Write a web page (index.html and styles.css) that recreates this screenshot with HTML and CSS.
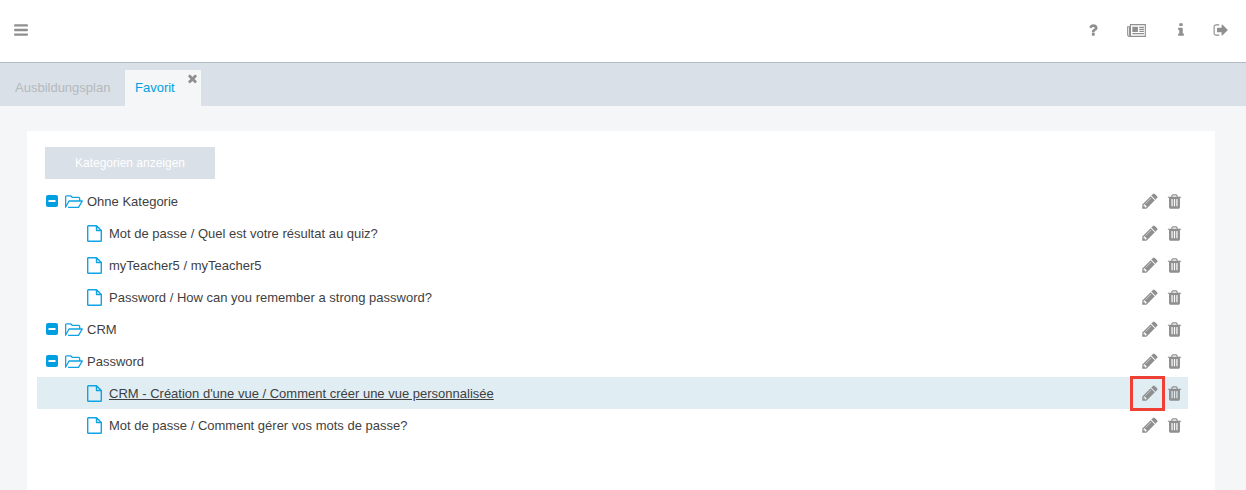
FILE: index.html
```html
<!DOCTYPE html>
<html lang="de">
<head>
    <meta charset="UTF-8">
    <meta name="viewport" content="width=device-width, initial-scale=1.0">
    <title>Favorit</title>
    <link rel="stylesheet" href="styles.css">
</head>
<body>
    <svg class="sprites" aria-hidden="true">
        <symbol id="i-bars" viewBox="0 0 1792 1792"><path d="M1664 1344v128q0 26-19 45t-45 19h-1408q-26 0-45-19t-19-45v-128q0-26 19-45t45-19h1408q26 0 45 19t19 45zm0-512v128q0 26-19 45t-45 19h-1408q-26 0-45-19t-19-45v-128q0-26 19-45t45-19h1408q26 0 45 19t19 45zm0-512v128q0 26-19 45t-45 19h-1408q-26 0-45-19t-19-45v-128q0-26 19-45t45-19h1408q26 0 45 19t19 45z"/></symbol>
        <symbol id="i-question" viewBox="0 0 1792 1792"><path d="M1088 1256v240q0 16-12 28t-28 12h-240q-16 0-28-12t-12-28v-240q0-16 12-28t28-12h240q16 0 28 12t12 28zm316-600q0 54-15.5 101t-35 76.5-55 59.5-57.5 43.5-61 35.5q-41 23-68.5 65t-27.5 67q0 17-12 32.5t-28 15.5h-240q-15 0-25.5-18.5t-10.5-37.5v-45q0-83 65-156.5t143-108.5q59-27 84-56t25-76q0-42-46.5-74t-107.5-32q-65 0-108 29-35 25-107 115-13 16-31 16-12 0-25-8l-164-125q-13-10-15.5-25t5.5-28q160-266 464-266 80 0 161 31t146 83 106 127.5 41 158.5z"/></symbol>
        <symbol id="i-info" viewBox="0 0 1792 1792"><path d="M1216 1344v128q0 26-19 45t-45 19h-512q-26 0-45-19t-19-45v-128q0-26 19-45t45-19h64v-384h-64q-26 0-45-19t-19-45v-128q0-26 19-45t45-19h384q26 0 45 19t19 45v576h64q26 0 45 19t19 45zm-128-1152v192q0 26-19 45t-45 19h-256q-26 0-45-19t-19-45v-192q0-26 19-45t45-19h256q26 0 45 19t19 45z"/></symbol>
        <symbol id="i-signout" viewBox="0 0 1792 1792"><path d="M704 1440q0 4 1 20t.5 26.5-3 23.5-10 19.5-20.5 6.5h-320q-119 0-203.5-84.5t-84.5-203.5v-704q0-119 84.5-203.5t203.5-84.5h320q13 0 22.5 9.5t9.5 22.5q0 4 1 20t.5 26.5-3 23.5-10 19.5-20.5 6.5h-320q-66 0-113 47t-47 113v704q0 66 47 113t113 47h312l11.5 1 11.5 3 8 5.5 7 9 2 13.5zm928-544q0 26-19 45l-544 544q-19 19-45 19t-45-19-19-45v-288h-448q-26 0-45-19t-19-45v-384q0-26 19-45t45-19h448v-288q0-26 19-45t45-19 45 19l544 544q19 19 19 45z"/></symbol>
        <symbol id="i-close" viewBox="0 0 1792 1792"><path d="M1490 1322q0 40-28 68l-136 136q-28 28-68 28t-68-28l-294-294-294 294q-28 28-68 28t-68-28l-136-136q-28-28-28-68t28-68l294-294-294-294q-28-28-28-68t28-68l136-136q28-28 68-28t68 28l294 294 294-294q28-28 68-28t68 28l136 136q28 28 28 68t-28 68l-294 294 294 294q28 28 28 68z"/></symbol>
        <symbol id="i-pencil" viewBox="0 0 1792 1792"><path d="M491 1536l91-91-235-235-91 91v107h128v128h107zm523-928q0-22-22-22-10 0-17 7l-542 542q-7 7-7 17 0 22 22 22 10 0 17-7l542-542q7-7 7-17zm-54-192l416 416-832 832h-416v-416zm683 96q0 53-37 90l-166 166-416-416 166-165q36-38 90-38 53 0 91 38l235 234q37 39 37 91z"/></symbol>
        <symbol id="i-trash" viewBox="0 0 1792 1792"><path d="M704 1376v-704q0-14-9-23t-23-9h-64q-14 0-23 9t-9 23v704q0 14 9 23t23 9h64q14 0 23-9t9-23zm256 0v-704q0-14-9-23t-23-9h-64q-14 0-23 9t-9 23v704q0 14 9 23t23 9h64q14 0 23-9t9-23zm256 0v-704q0-14-9-23t-23-9h-64q-14 0-23 9t-9 23v704q0 14 9 23t23 9h64q14 0 23-9t9-23zm-544-992h448l-48-117q-7-9-17-11h-317q-10 2-17 11zm928 32v64q0 14-9 23t-23 9h-96v948q0 83-47 143.5t-113 60.5h-832q-66 0-113-58.5t-47-141.5v-952h-96q-14 0-23-9t-9-23v-64q0-14 9-23t23-9h309l70-167q15-37 54-63t79-26h320q40 0 79 26t54 63l70 167h309q14 0 23 9t9 23z"/></symbol>
        <symbol id="i-news" viewBox="0 0 20 14"><path d="M3.500 .7h16v12.600h-17q-2 0-2-2v-8.300h2v8.300q0 .7 1 .7z" fill="none" stroke="currentColor" stroke-width="1.200"/><path d="M5.500 3h6v5.500h-6zM13 3h5v1.300h-5zM13 5.100h5v1.300h-5zM13 7.200h5v1.300h-5zM5.500 9.800h12.500v1.300h-12.500z"/></symbol>
        <symbol id="i-minus" viewBox="0 0 12 12"><rect width="12" height="12" rx="2" fill="#00a0e0"/><rect x="2.500" y="5" width="7" height="2" fill="#fff"/></symbol>
        <symbol id="i-folder" viewBox="0 0 18 13"><path d="M3 12.400h10.500l3.800-6.400h-13.300l-3.400 6.200v-10.200q0-1.200 1.200-1.200h3.800l1.500 1.500h6.400q1.200 0 1.200 1.200v2.500" fill="none" stroke="#0ea3e2" stroke-width="1.300" stroke-linejoin="round"/></symbol>
        <symbol id="i-file" viewBox="0 0 15 17"><path d="M1.500 .7h8l4.800 4.800v10q0 .8-.8.8h-12q-.8 0-.8-.8v-14q0-.8 .8-.8zM9.500 .7v4.800h4.800" fill="none" stroke="#0ea3e2" stroke-width="1.400" stroke-linejoin="round"/></symbol>
    </svg>

    <header class="topbar">
        <svg class="ico bars"><use href="#i-bars"/></svg>
        <nav class="top-icons">
            <svg class="ico question"><use href="#i-question"/></svg>
            <svg class="ico news"><use href="#i-news"/></svg>
            <svg class="ico info"><use href="#i-info"/></svg>
            <svg class="ico signout"><use href="#i-signout"/></svg>
        </nav>
    </header>

    <div class="tabs">
        <div class="tab">Ausbildungsplan</div>
        <div class="tab active">Favorit<svg class="ico tab-close"><use href="#i-close"/></svg></div>
    </div>

    <main class="content">
        <section class="card">
            <button class="btn-cat" type="button">Kategorien anzeigen</button>
            <ul class="tree">
                <li class="row">
                    <svg class="minus"><use href="#i-minus"/></svg>
                    <svg class="folder"><use href="#i-folder"/></svg>
                    <span class="label">Ohne Kategorie</span>
                    <span class="actions"><svg class="ico pencil"><use href="#i-pencil"/></svg><svg class="ico trash"><use href="#i-trash"/></svg></span>
                </li>
                <li class="row child">
                    <svg class="file"><use href="#i-file"/></svg>
                    <span class="label">Mot de passe / Quel est votre résultat au quiz?</span>
                    <span class="actions"><svg class="ico pencil"><use href="#i-pencil"/></svg><svg class="ico trash"><use href="#i-trash"/></svg></span>
                </li>
                <li class="row child">
                    <svg class="file"><use href="#i-file"/></svg>
                    <span class="label">myTeacher5 / myTeacher5</span>
                    <span class="actions"><svg class="ico pencil"><use href="#i-pencil"/></svg><svg class="ico trash"><use href="#i-trash"/></svg></span>
                </li>
                <li class="row child">
                    <svg class="file"><use href="#i-file"/></svg>
                    <span class="label">Password / How can you remember a strong password?</span>
                    <span class="actions"><svg class="ico pencil"><use href="#i-pencil"/></svg><svg class="ico trash"><use href="#i-trash"/></svg></span>
                </li>
                <li class="row">
                    <svg class="minus"><use href="#i-minus"/></svg>
                    <svg class="folder"><use href="#i-folder"/></svg>
                    <span class="label">CRM</span>
                    <span class="actions"><svg class="ico pencil"><use href="#i-pencil"/></svg><svg class="ico trash"><use href="#i-trash"/></svg></span>
                </li>
                <li class="row">
                    <svg class="minus"><use href="#i-minus"/></svg>
                    <svg class="folder"><use href="#i-folder"/></svg>
                    <span class="label">Password</span>
                    <span class="actions"><svg class="ico pencil"><use href="#i-pencil"/></svg><svg class="ico trash"><use href="#i-trash"/></svg></span>
                </li>
                <li class="row child selected">
                    <svg class="file"><use href="#i-file"/></svg>
                    <span class="label">CRM - Création d'une vue / Comment créer une vue personnalisée</span>
                    <span class="actions"><svg class="ico pencil"><use href="#i-pencil"/></svg><svg class="ico trash"><use href="#i-trash"/></svg></span>
                    <span class="marker"></span>
                </li>
                <li class="row child">
                    <svg class="file"><use href="#i-file"/></svg>
                    <span class="label">Mot de passe / Comment gérer vos mots de passe?</span>
                    <span class="actions"><svg class="ico pencil"><use href="#i-pencil"/></svg><svg class="ico trash"><use href="#i-trash"/></svg></span>
                </li>
            </ul>
        </section>
    </main>
</body>
</html>
```

FILE: styles.css
```css
html, body {
    margin: 0;
    padding: 0;
    height: 100%;
    overflow: hidden;
}

body {
    font-family: 'Liberation Sans', 'Arial', sans-serif;
    font-size: 13px;
    color: #3f3f3f;
    background-color: #f4f6f8;
    display: flex;
    flex-direction: column;
}

.sprites {
    display: none;
}

.ico {
    fill: #8f8f8f;
    color: #8f8f8f;
    display: block;
    flex: none;
}

/* top bar */
.topbar {
    height: 60px;
    background-color: #fff;
    border-bottom: 1px solid #b4bcc3;
    display: flex;
    align-items: center;
    justify-content: space-between;
    padding: 0 17px 2px 13px;
    flex: none;
}

.bars {
    width: 16px;
    height: 16px;
}

.top-icons {
    display: flex;
    align-items: center;
}

.question {
    width: 16px;
    height: 16px;
}

.news {
    width: 19px;
    height: 13px;
    margin-left: 26px;
}

.info {
    width: 16px;
    height: 16px;
    margin-left: 27px;
}

.signout {
    width: 16px;
    height: 16px;
    margin-left: 24px;
}

/* tabs */
.tabs {
    height: 36px;
    padding-top: 7px;
    background-color: #d9e0e7;
    display: flex;
    flex: none;
}

.tab {
    width: 125px;
    padding-left: 15px;
    box-sizing: border-box;
    line-height: 36px;
    color: #b5b9bd;
}

.tab.active {
    position: relative;
    width: 76px;
    padding-left: 10px;
    background-color: #f4f6f8;
    color: #00a0e0;
}

.tab-close {
    position: absolute;
    top: 2px;
    right: 2px;
    width: 13px;
    height: 13px;
}

/* content */
.content {
    flex: 1;
    padding: 25px 31px 0 27px;
    display: flex;
    min-height: 0;
}

.card {
    flex: 1;
    background-color: #fff;
    padding: 16px 27px 0 10px;
}

.btn-cat {
    display: block;
    width: 170px;
    height: 32px;
    margin-left: 8px;
    border: 0;
    padding: 0;
    background-color: #d9e0e7;
    color: #fff;
    font-family: inherit;
    font-size: 12px;
}

.tree {
    list-style: none;
    margin: 6px 0 0;
    padding: 0;
}

.row {
    position: relative;
    height: 32px;
    display: flex;
    align-items: center;
    padding-left: 9px;
}

.row.child {
    padding-left: 50px;
}

.row.selected {
    background-color: #e0eef4;
}

.row.selected .label {
    text-decoration: underline;
}

.minus {
    width: 12px;
    height: 12px;
    margin-right: 7px;
    flex: none;
}

.folder {
    width: 18px;
    height: 13px;
    margin-right: 4px;
    flex: none;
}

.file {
    width: 15px;
    height: 17px;
    margin-right: 7px;
    flex: none;
}

.actions {
    margin-left: auto;
    display: flex;
    align-items: center;
    gap: 7px;
    padding-right: 5px;
}

.pencil {
    width: 18px;
    height: 18px;
}

.trash {
    width: 17px;
    height: 17px;
}

/* red highlight drawn over the pencil */
.marker {
    position: absolute;
    top: -1px;
    right: 23px;
    width: 35px;
    height: 35px;
    box-sizing: border-box;
    border: 3px solid #ee4035;
}
```
